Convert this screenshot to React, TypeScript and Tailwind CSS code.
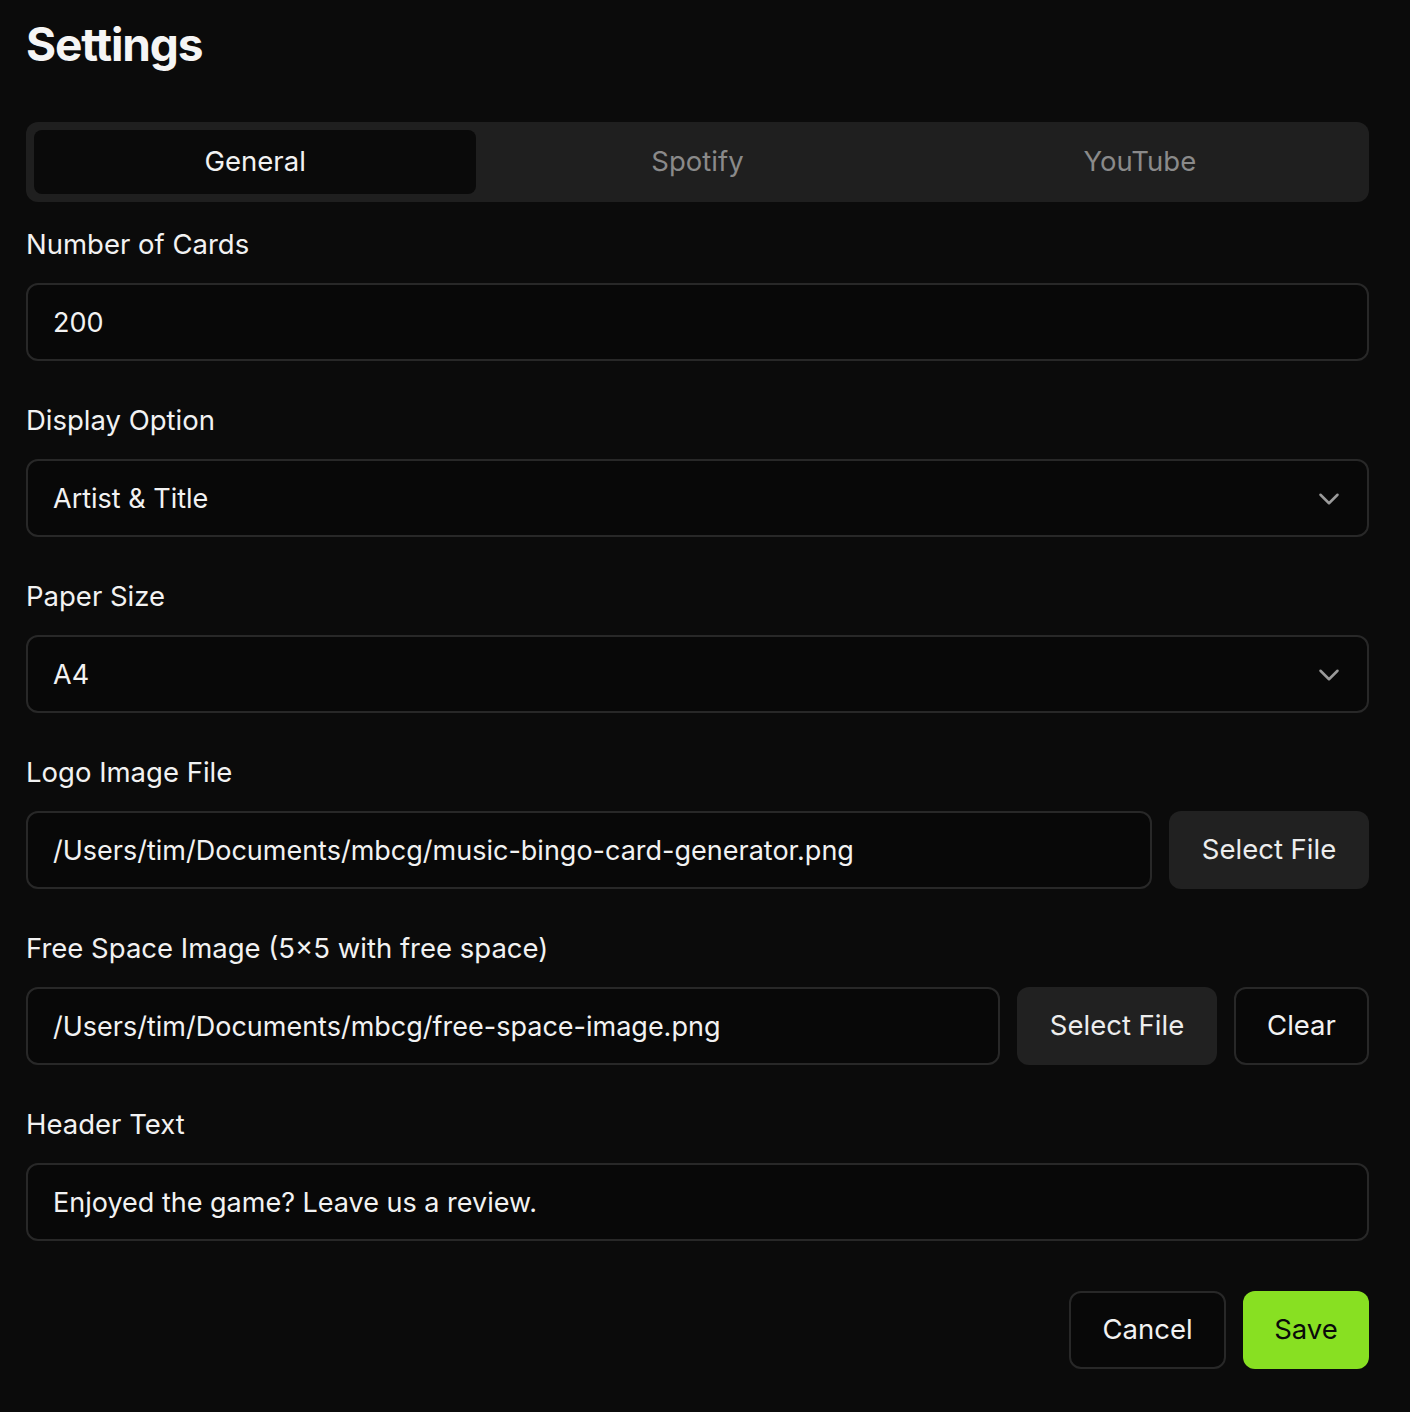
import { ChevronDown } from "lucide-react";

const font = { fontFamily: "Inter, 'Noto Sans', sans-serif" };

const inputCls =
  "h-[78px] w-full rounded-xl border-2 border-[#282828] bg-[#080808] px-[25px] pt-[2px] flex items-center text-[27px] text-[#f2f2f2]";

function Label({ children }: { children: React.ReactNode }) {
  return <div className="h-[36px] flex items-center text-[27.5px] text-[#f2f2f2] mb-[20px]">{children}</div>;
}

function SelectBox({ value }: { value: string }) {
  return (
    <div className={`${inputCls} justify-between pr-[21px]`}>
      <span>{value}</span>
      <ChevronDown size={34} strokeWidth={1.8} className="text-[#9a9a9a]" />
    </div>
  );
}

export default function App() {
  const tabs = ["General", "Spotify", "YouTube"];
  return (
    <div className="min-h-[1412px] w-full bg-[#0b0b0b] pl-[26px] pr-[41px] pt-[14px] pb-[40px]" style={font}>
      <h1 className="text-[46px] font-bold tracking-tight text-[#f5f5f5] leading-[60px]">Settings</h1>

      {/* Tabs */}
      <div className="mt-[48px] h-[80px] rounded-xl bg-[#1f1f1f] p-[8px] grid grid-cols-3">
        {tabs.map((t, i) => (
          <div
            key={t}
            className={`flex items-center justify-center rounded-lg text-[27.5px] ${
              i === 0 ? "bg-[#0a0a0a] text-[#f2f2f2]" : "text-[#8a8a8a]"
            }`}
          >
            {t}
          </div>
        ))}
      </div>

      <div className="mt-[25px]">
        <Label>Number of Cards</Label>
        <div className={inputCls}>200</div>
      </div>

      <div className="mt-[42px]">
        <Label>Display Option</Label>
        <SelectBox value="Artist & Title" />
      </div>

      <div className="mt-[42px]">
        <Label>Paper Size</Label>
        <SelectBox value="A4" />
      </div>

      <div className="mt-[42px]">
        <Label>Logo Image File</Label>
        <div className="flex gap-[17px]">
          <div className={`${inputCls} flex-1 bg-[#060606]`}>/Users/tim/Documents/mbcg/music-bingo-card-generator.png</div>
          <button className="h-[78px] w-[200px] shrink-0 rounded-xl bg-[#212121] text-[27.5px] text-[#ededed]">
            Select File
          </button>
        </div>
      </div>

      <div className="mt-[42px]">
        <Label>Free Space Image (5×5 with free space)</Label>
        <div className="flex gap-[17px]">
          <div className={`${inputCls} flex-1 bg-[#060606]`}>/Users/tim/Documents/mbcg/free-space-image.png</div>
          <button className="h-[78px] w-[200px] shrink-0 rounded-xl bg-[#212121] text-[27.5px] text-[#ededed]">
            Select File
          </button>
          <button className="h-[78px] w-[135px] shrink-0 rounded-xl border-2 border-[#282828] bg-[#080808] text-[27.5px] text-[#f2f2f2]">
            Clear
          </button>
        </div>
      </div>

      <div className="mt-[42px]">
        <Label>Header Text</Label>
        <div className={inputCls}>Enjoyed the game? Leave us a review.</div>
      </div>

      <div className="mt-[50px] flex justify-end gap-[17px]">
        <button className="h-[78px] w-[157px] rounded-xl border-2 border-[#282828] bg-[#080808] text-[27.5px] text-[#f2f2f2]">
          Cancel
        </button>
        <button className="h-[78px] w-[126px] rounded-xl bg-[#88e022] text-[27.5px] text-[#0a0a0a]">Save</button>
      </div>
    </div>
  );
}
